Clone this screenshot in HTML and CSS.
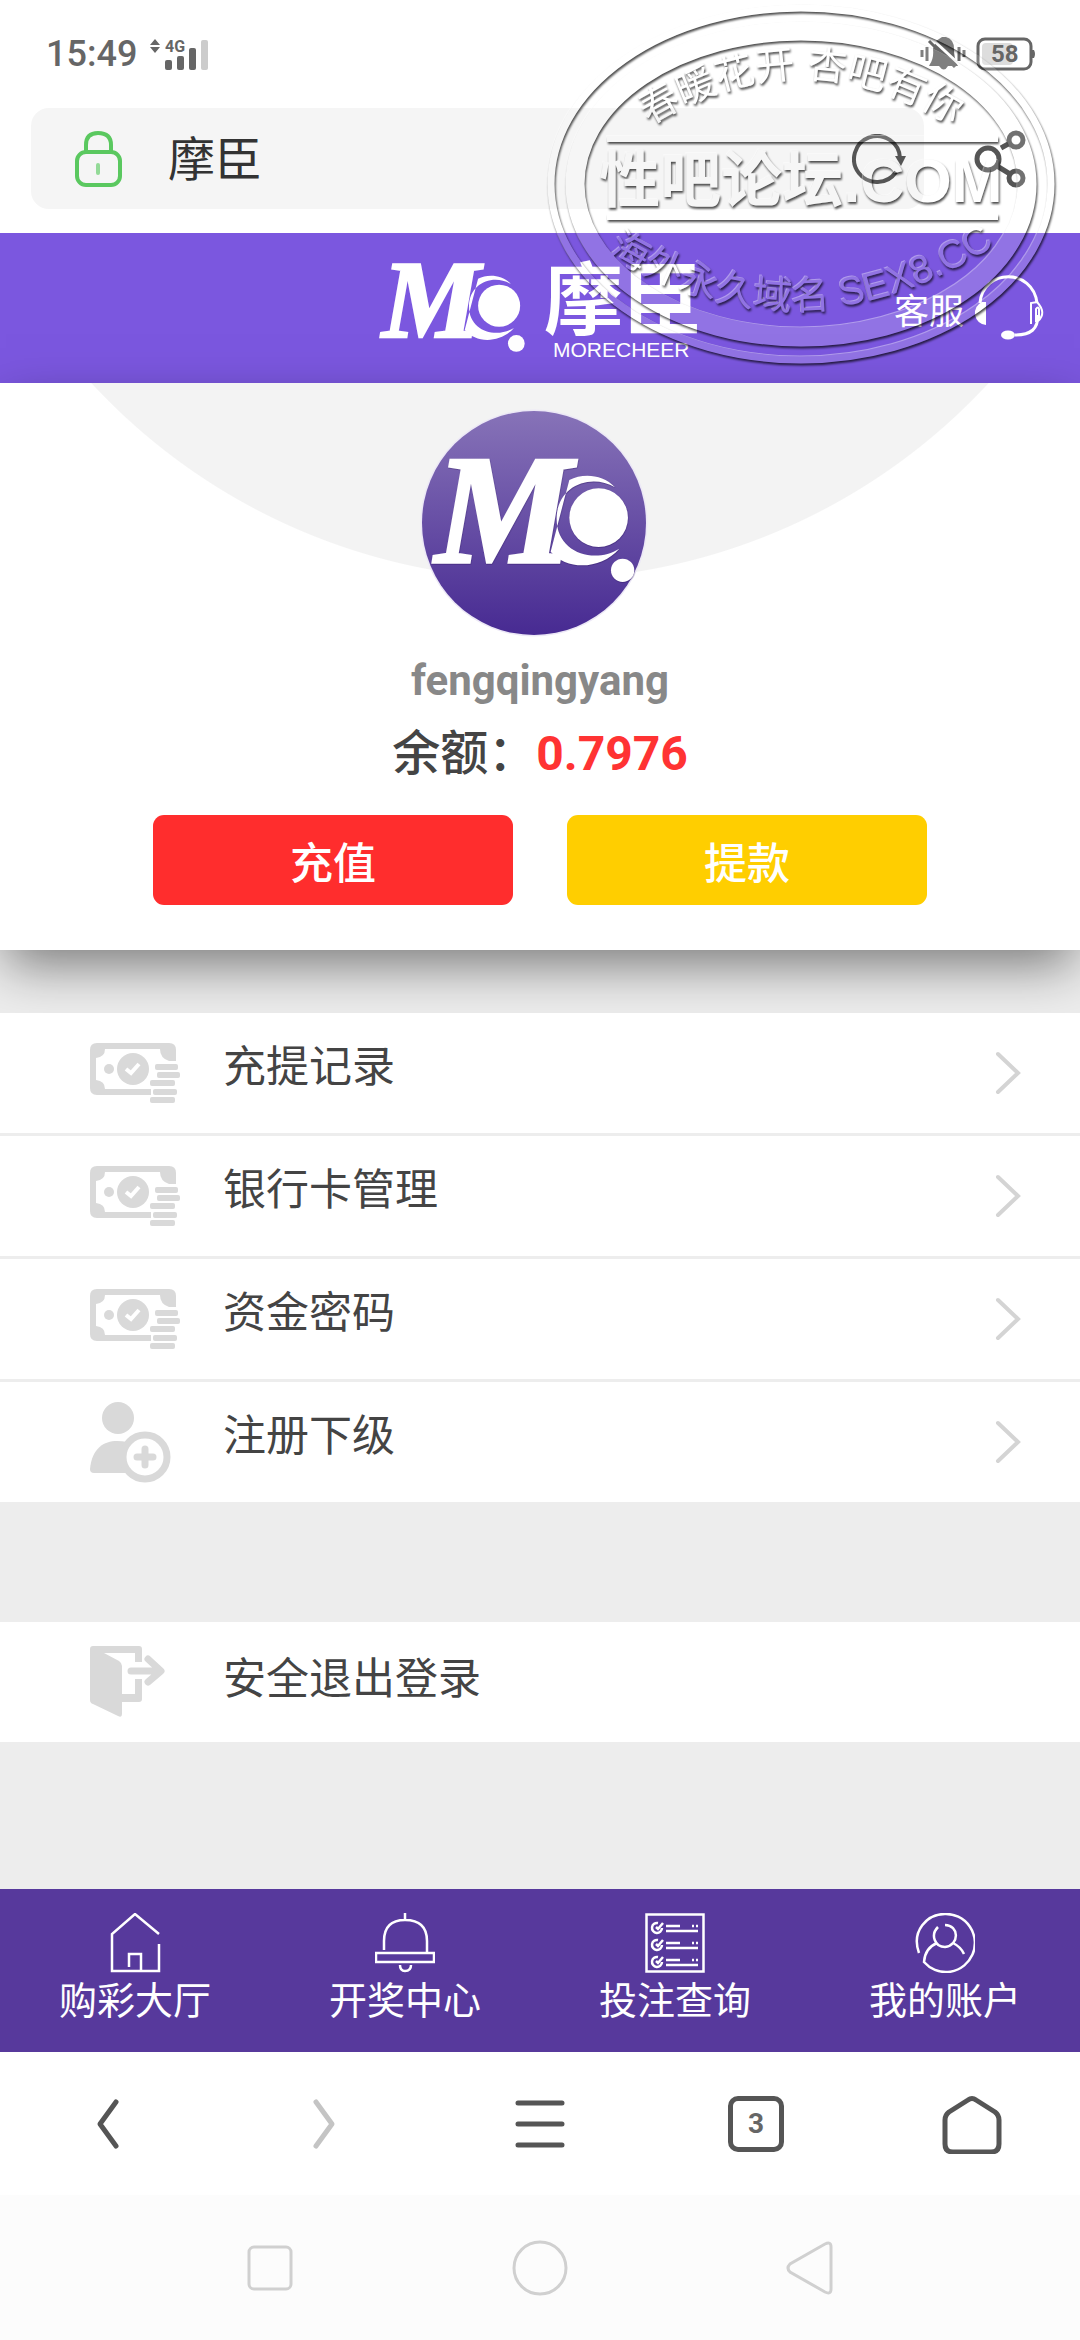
FILE: index.html
```html
<!DOCTYPE html>
<html lang="zh-CN">
<head>
    <meta charset="UTF-8">
    <meta name="viewport" content="width=device-width, initial-scale=1.0">
    <title>摩臣</title>
    <link rel="stylesheet" href="styles.css">
</head>
<body>
    <!-- shared shapes -->
    <svg class="defs" width="0" height="0" aria-hidden="true">
        <defs>
            <symbol id="mc-logo" viewBox="0 0 900 700" overflow="visible">
                <text class="logo-letter" x="226" y="545">M</text>
                <path d="M765 322C728 282 668 280 628 300L572 515C620 572 722 570 778 506C704 552 590 520 590 416C590 318 692 278 765 322Z"/>
                <circle cx="716" cy="413" r="88"/>
                <circle cx="788" cy="571" r="35"/>
            </symbol>
            <symbol id="icon-money" viewBox="0 0 90 60">
                <path fill-rule="evenodd" d="M7 0H79Q86 0 86 7V18H79Q70 15 70 6H15Q15 14 6 15V37Q15 38 15 46H61V52H7Q0 52 0 45V7Q0 0 7 0Z"/>
                <circle cx="19" cy="26" r="5"/>
                <circle cx="43" cy="26" r="16"/>
                <path d="M36 26L41 30L49 21" fill="none" stroke="#fff" stroke-width="4"/>
                <rect x="65" y="21" width="23" height="6" rx="2"/>
                <rect x="67" y="29" width="23" height="6" rx="2"/>
                <rect x="60" y="37" width="25" height="6" rx="2"/>
                <rect x="63" y="46" width="24" height="6" rx="2"/>
                <rect x="60" y="54" width="25" height="6" rx="2"/>
            </symbol>
            <symbol id="icon-arrow" viewBox="0 0 26 44">
                <path d="M3 3L23 22L3 41" fill="none" stroke="#d4d4d4" stroke-width="4" stroke-linecap="round"/>
            </symbol>
        </defs>
    </svg>

    <div class="status-bar">
        <span class="time">15:49</span>
        <svg class="signal" width="60" height="34" viewBox="0 0 60 34">
            <path d="M1 8L6 2L11 8ZM1 10H11L6 16Z"/>
            <text x="16" y="15">4G</text>
            <rect x="16" y="23" width="7" height="10" rx="2"/>
            <rect x="28" y="19" width="7" height="14" rx="2"/>
            <rect x="40" y="11" width="7" height="22" rx="2"/>
            <rect x="52" y="3" width="7" height="30" rx="2" fill="#ccc"/>
        </svg>
        <svg class="muted" width="46" height="36" viewBox="0 0 46 36">
            <path d="M10 28Q14 22 13 13L16 5L22 1H26Q34 3 34 13Q34 22 37 28L38 30H28Q24 37 19 30H9Z"/>
            <path d="M12 3L39 28" stroke="#fff" stroke-width="3"/>
            <path d="M9 5L35 31M2 14V21M7 11V25M39 11V25M44 14V21" stroke="#666" stroke-width="3"/>
        </svg>
        <svg class="battery" width="60" height="34" viewBox="0 0 60 34">
            <rect x="6" y="6" width="31" height="22" rx="4" fill="#ddd"/>
            <rect x="2" y="2" width="53" height="30" rx="7" fill="none" stroke="#666" stroke-width="3"/>
            <path d="M56 13H58Q60 17 58 21H56Z"/>
            <text x="15" y="25">58</text>
        </svg>
    </div>

    <div class="browser-bar">
        <div class="address">
            <svg width="47" height="56" viewBox="0 0 47 56" fill="none" stroke="#5ac85f" stroke-width="4">
                <path d="M11 21V14Q11 2 23 2Q36 2 36 14V21"/>
                <rect x="2" y="21" width="43" height="33" rx="9"/>
                <path d="M23 34V42" stroke="#93da97" stroke-linecap="round"/>
            </svg>
            <input type="text" class="address-input" value="摩臣" aria-label="网址">
            <button class="icon-btn" aria-label="刷新">
                <svg width="54" height="50" viewBox="0 0 54 50">
                    <path d="M44 38A23 23 0 1 1 48 24" fill="none" stroke="#555" stroke-width="4"/>
                    <path d="M43 22H54L49 32Z" fill="#555"/>
                </svg>
            </button>
        </div>
        <button class="icon-btn" aria-label="分享">
            <svg width="52" height="58" viewBox="0 0 52 58" fill="none" stroke="#555" stroke-width="5">
                <circle cx="14" cy="29" r="11"/>
                <circle cx="42" cy="10" r="7"/>
                <circle cx="42" cy="48" r="7"/>
                <path d="M27 18L36 13M23 36L36 44"/>
            </svg>
        </button>
    </div>

    <header class="site-header">
        <a class="logo" href="#">
            <svg class="logo-mark" width="148" height="90" viewBox="0 0 148 90">
                <use href="#mc-logo" width="900" height="700" transform="translate(-50 -56) scale(.239)"/>
            </svg>
            <span class="logo-text">
                <strong>摩臣</strong>
                <small>MORECHEER</small>
            </span>
        </a>
        <a class="service" href="#">
            客服
            <svg width="70" height="66" viewBox="0 0 70 66">
                <path d="M6 28C9 -7 59 -7 63 28M64 40C64 54 57 60 41 60" fill="none" stroke="#fff" stroke-width="3"/>
                <path d="M12 27V50Q3 49 1 40Q0 31 8 27Z"/>
                <path d="M57 49V28L63 27Q73 38 64 46M62 47V34Q64 31 65 34V43" fill="none" stroke="#fff" stroke-width="2"/>
                <ellipse cx="34" cy="60" rx="7" ry="4.500"/>
            </svg>
        </a>
    </header>

    <main>
        <section class="profile">
            <svg class="avatar" width="236" height="224" viewBox="0 0 236 224">
                <defs>
                    <linearGradient id="avatarFill" x1="0" y1="0" x2="0" y2="1">
                        <stop offset="0" stop-color="#8773b8"/>
                        <stop offset="1" stop-color="#472a92"/>
                    </linearGradient>
                </defs>
                <circle class="avatar-bg" cx="112" cy="112" r="112" fill="url(#avatarFill)"/>
                <use class="avatar-mark" href="#mc-logo" width="900" height="700" transform="translate(-62 -31) scale(.3333)"/>
            </svg>
            <div class="username">fengqingyang</div>
            <div class="balance">余额：<span>0.7976</span></div>
            <div class="actions">
                <button class="btn recharge">充值</button>
                <button class="btn withdraw">提款</button>
            </div>
        </section>

        <nav class="menu">
            <a href="#"><svg class="menu-icon" width="90" height="60"><use href="#icon-money"/></svg><span>充提记录</span><svg width="26" height="44"><use href="#icon-arrow"/></svg></a>
            <a href="#"><svg class="menu-icon" width="90" height="60"><use href="#icon-money"/></svg><span>银行卡管理</span><svg width="26" height="44"><use href="#icon-arrow"/></svg></a>
            <a href="#"><svg class="menu-icon" width="90" height="60"><use href="#icon-money"/></svg><span>资金密码</span><svg width="26" height="44"><use href="#icon-arrow"/></svg></a>
            <a href="#">
                <svg class="menu-icon" width="90" height="82" viewBox="0 0 90 82">
                    <circle cx="28" cy="17" r="16"/>
                    <path d="M4 72Q0 72 0 68C2 47 14 40 27 40Q38 40 44 44L44 72Z"/>
                    <circle cx="55" cy="56" r="22" fill="#fff" stroke="#d9d9d9" stroke-width="7"/>
                    <path d="M47 56H63M55 48V64" stroke="#d9d9d9" stroke-width="7" stroke-linecap="round"/>
                </svg>
                <span>注册下级</span><svg width="26" height="44"><use href="#icon-arrow"/></svg>
            </a>
        </nav>

        <nav class="menu logout">
            <a href="#">
                <svg class="menu-icon" width="90" height="72" viewBox="0 0 90 72">
                    <path d="M3 0H49Q52 0 52 3V16H45V7H14L29 15Q32 17 32 20V48H45V33H52V53Q52 56 49 56H32V68Q32 72 28 70L3 58Q0 57 0 54V3Q0 0 3 0Z"/>
                    <path d="M41 25H70M58 13L71 25L58 36" fill="none" stroke="#d9d9d9" stroke-width="7" stroke-linecap="round" stroke-linejoin="round"/>
                </svg>
                <span>安全退出登录</span>
            </a>
        </nav>
    </main>

    <nav class="tab-bar">
        <a href="#">
            <svg width="60" height="60" viewBox="0 0 60 60">
                <path d="M54 21L30 1L7 21V58H54V31M24 54V41H36V58"/>
            </svg>
            购彩大厅
        </a>
        <a href="#">
            <svg width="60" height="60" viewBox="0 0 60 60">
                <path d="M30 0V7M9 37V28Q9 7 30 7Q52 7 52 28V40M1 40H59V49H1ZM25 52Q25 58 30 58Q36 58 36 52"/>
            </svg>
            开奖中心
        </a>
        <a href="#">
            <svg width="60" height="60" viewBox="0 0 60 60">
                <rect x="1.500" y="1.500" width="57" height="57"/>
                <path d="M13 10A5 5 0 1 0 17 15M11 14L13 16L18 10M13 27A5 5 0 1 0 17 32M11 31L13 33L18 27M13 44A5 5 0 1 0 17 49M11 48L13 50L18 44"/>
                <path d="M21 13H35M21 18H53M47 13H49M51 13H53M21 30H35M21 35H53M47 30H49M51 30H53M21 47H35M21 52H53M47 47H49M51 47H53"/>
            </svg>
            投注查询
        </a>
        <a href="#">
            <svg width="60" height="60" viewBox="0 0 60 60">
                <path d="M4 40C-4 18 12 1 30 1A29 29 0 1 1 9 49Q10 35 22 30M38 30Q46 34 49 41M23 14C15 22 20 34 30 34C45 32 44 12 30 12"/>
            </svg>
            我的账户
        </a>
    </nav>

    <nav class="browser-nav">
        <button class="icon-btn" aria-label="后退"><svg width="60" height="60" viewBox="0 0 60 60"><path d="M38 8L22 30L38 52"/></svg></button>
        <button class="icon-btn" aria-label="前进"><svg class="disabled" width="60" height="60" viewBox="0 0 60 60"><path d="M22 8L38 30L22 52"/></svg></button>
        <button class="icon-btn" aria-label="菜单"><svg width="60" height="60" viewBox="0 0 60 60"><path d="M8 9H52M8 30H52M8 51H52"/></svg></button>
        <button class="icon-btn" aria-label="窗口"><span class="tab-count">3</span></button>
        <button class="icon-btn" aria-label="主页"><svg width="60" height="60" viewBox="0 0 60 60"><path d="M26 6Q30 3 34 6L53 18Q57 21 57 26V50Q57 58 49 58H11Q3 58 3 50V26Q3 21 7 18Z"/></svg></button>
    </nav>

    <div class="system-nav">
        <button class="icon-btn" aria-label="最近任务"><svg width="60" height="60" viewBox="0 0 60 60"><rect x="9" y="9" width="42" height="42" rx="5"/></svg></button>
        <button class="icon-btn" aria-label="桌面"><svg width="60" height="60" viewBox="0 0 60 60"><circle cx="30" cy="30" r="26"/></svg></button>
        <button class="icon-btn" aria-label="返回"><svg width="60" height="60" viewBox="0 0 60 60"><path d="M45 6Q51 3 51 9V51Q51 57 45 54L10 34Q6 30 10 26Z"/></svg></button>
    </div>

    <!-- embossed forum stamp -->
    <svg class="stamp" width="520" height="376" viewBox="541 0 520 376">
        <defs>
            <filter id="emboss" filterUnits="userSpaceOnUse" x="541" y="0" width="520" height="376" color-interpolation-filters="sRGB">
                <feOffset in="SourceAlpha" dx="1" dy="2" result="down"/>
                <feGaussianBlur in="down" stdDeviation="0.8" result="downBlur"/>
                <feComposite in="downBlur" in2="SourceAlpha" operator="out" result="shadeMask"/>
                <feFlood flood-color="#000" flood-opacity="0.7"/>
                <feComposite in2="shadeMask" operator="in" result="shade"/>
                <feOffset in="SourceAlpha" dx="-1" dy="-1" result="up"/>
                <feComposite in="up" in2="SourceAlpha" operator="out" result="lightMask"/>
                <feFlood flood-color="#fff" flood-opacity="0.4"/>
                <feComposite in2="lightMask" operator="in" result="light"/>
                <feComponentTransfer in="SourceGraphic" result="body">
                    <feFuncA type="linear" slope="0.17"/>
                </feComponentTransfer>
                <feMerge>
                    <feMergeNode in="light"/>
                    <feMergeNode in="shade"/>
                    <feMergeNode in="body"/>
                </feMerge>
            </filter>
            <path id="arcTop" d="M636 134Q801 22 966 134"/>
            <path id="arcBottom" d="M602 250Q800 373 1000 242"/>
        </defs>
        <g filter="url(#emboss)">
            <ellipse cx="801" cy="184" rx="250" ry="176" fill="none" stroke="#fff" stroke-width="7"/>
            <ellipse cx="801" cy="184" rx="226" ry="153" fill="none" stroke="#fff" stroke-width="19"/>
            <rect x="607" y="136" width="391" height="6" fill="#fff"/>
            <rect x="607" y="214" width="391" height="6" fill="#fff"/>
            <text class="stamp-arc"><textPath href="#arcTop" startOffset="50%" text-anchor="middle">春暖花开 杏吧有你</textPath></text>
            <text class="stamp-main" x="801" y="202" text-anchor="middle">性吧论坛.COM</text>
            <text class="stamp-arc"><textPath href="#arcBottom" startOffset="50%" text-anchor="middle">海外永久域名 SEX8.CC</textPath></text>
        </g>
    </svg>
</body>
</html>
```
FILE: styles.css
```css
* {
    box-sizing: border-box;
}
body {
    margin: 0;
    min-height: 100vh;
    display: flex;
    flex-direction: column;
    position: relative;
    font-family: Roboto, "Noto Sans CJK SC", sans-serif;
    background-color: #ededed;
    color: #444;
}
a {
    color: inherit;
    text-decoration: none;
}
svg {
    display: block;
    flex-shrink: 0;
}
.defs {
    position: absolute;
}
.icon-btn {
    display: flex;
    align-items: center;
    justify-content: center;
    padding: 0;
    border: none;
    background: none;
    cursor: pointer;
}

/* phone status bar */
.status-bar {
    display: flex;
    align-items: center;
    height: 108px;
    padding: 0 44px 0 46px;
    background-color: #fff;
    fill: #666;
}
.time {
    font-size: 36px;
    font-weight: 500;
    line-height: 44px;
    color: #666;
}
.signal {
    margin-left: 12px;
}
.signal text {
    font-size: 16px;
    font-weight: bold;
}
.muted {
    margin-left: auto;
}
.battery {
    margin-left: 10px;
}
.battery text {
    font-size: 24px;
    font-weight: bold;
}

/* address bar */
.browser-bar {
    display: flex;
    align-items: center;
    gap: 50px;
    padding: 0 54px 24px 31px;
    background-color: #fff;
}
.address {
    flex: 1;
    display: flex;
    align-items: center;
    height: 101px;
    padding: 0 18px 0 44px;
    border-radius: 18px;
    background-color: #f5f5f5;
}
.address-input {
    flex: 1;
    min-width: 0;
    margin-left: 46px;
    padding: 0 0 6px;
    border: none;
    background: none;
    font-family: inherit;
    font-size: 47px;
    color: #333;
}

/* site header */
.site-header {
    display: grid;
    grid-template-columns: 1fr auto 1fr;
    align-items: center;
    height: 150px;
    background-color: #7b57df;
    color: #fff;
    fill: #fff;
}
.logo {
    grid-column: 2;
    display: flex;
    align-items: center;
    gap: 18px;
}
.logo-letter {
    font-family: "Liberation Serif", serif;
    font-size: 462px;
    font-weight: bold;
    font-style: italic;
    stroke: #fff;
    stroke-width: 10px;
}
.logo-text {
    padding-top: 8px;
}
.logo-text strong {
    display: block;
    font-size: 79px;
    line-height: 76px;
}
.logo-text small {
    display: block;
    padding-left: 9px;
    font-family: "Liberation Sans", sans-serif;
    font-size: 21px;
    line-height: 20px;
}
.service {
    justify-self: end;
    display: flex;
    align-items: center;
    gap: 10px;
    padding-right: 36px;
    font-size: 35px;
}

/* profile */
.profile {
    padding: 28px 0 45px;
    text-align: center;
    background: radial-gradient(circle at 50% -414px, #f3f3f3 610px, #fff 611px);
    box-shadow: 0 20px 50px -6px rgba(0, 0, 0, 0.5);
}
.avatar {
    margin: 0 auto;
    overflow: visible;
}
.avatar-bg {
    stroke: #ece8f6;
    stroke-width: 3px;
    paint-order: stroke;
}
.avatar-mark {
    fill: #fff;
    filter: drop-shadow(1px 2px 1px rgba(40, 20, 90, 0.5));
}
.username {
    margin-top: 18px;
    font-size: 42px;
    font-weight: bold;
    line-height: 56px;
    color: #888;
}
.balance {
    margin-top: 8px;
    font-size: 48px;
    font-weight: 500;
    line-height: 74px;
}
.balance span {
    font-weight: bold;
    color: #ff3333;
}
.actions {
    display: flex;
    justify-content: center;
    gap: 5%;
    margin-top: 24px;
}
.btn {
    width: 33.333%;
    height: 90px;
    border: none;
    border-radius: 11px;
    color: #fff;
    font-family: inherit;
    font-size: 43px;
    font-weight: 500;
    cursor: pointer;
}
.recharge {
    background-color: #ff2d2d;
}
.withdraw {
    background-color: #ffce00;
}

/* menu list */
.menu {
    display: flex;
    flex-direction: column;
    gap: 3px;
    margin-top: 63px;
}
.menu a {
    display: flex;
    align-items: center;
    height: 120px;
    padding: 0 59px 0 90px;
    background-color: #fff;
    font-size: 43px;
}
.menu-icon {
    fill: #d9d9d9;
}
.menu span {
    flex: 1;
    margin-left: 43px;
    padding-bottom: 20px;
}
.logout {
    margin-top: 120px;
}
.logout span {
    padding-bottom: 14px;
}

/* bottom tabs */
.tab-bar {
    display: flex;
    margin-top: auto;
    padding-top: 24px;
    height: 163px;
    background-color: #57399c;
    color: #fff;
}
.tab-bar a {
    flex: 1;
    display: flex;
    flex-direction: column;
    align-items: center;
    font-size: 38px;
    line-height: 56px;
}
.tab-bar svg {
    fill: none;
    stroke: #fff;
    stroke-width: 2.5px;
}

/* browser buttons */
.browser-nav {
    display: flex;
    height: 143px;
    background-color: #fff;
}
.browser-nav .icon-btn {
    flex: 1;
}
.browser-nav svg {
    fill: none;
    stroke: #555;
    stroke-width: 5px;
    stroke-linecap: round;
    stroke-linejoin: round;
}
.browser-nav .disabled {
    stroke: #c4c4c4;
}
.tab-count {
    width: 56px;
    height: 56px;
    border: 5px solid #555;
    border-radius: 10px;
    font-family: Roboto, sans-serif;
    font-size: 28px;
    font-weight: bold;
    line-height: 46px;
    color: #666;
}

/* system buttons */
.system-nav {
    display: flex;
    justify-content: center;
    height: 145px;
    background-color: #fcfcfc;
}
.system-nav .icon-btn {
    width: 25%;
}
.system-nav svg {
    fill: none;
    stroke: #d0d0d0;
    stroke-width: 3px;
}

/* stamp over the top of the page */
.stamp {
    position: absolute;
    top: 0;
    right: 19px;
    pointer-events: none;
}
.stamp text {
    fill: #fff;
    font-family: "Liberation Sans", "Noto Sans CJK SC", sans-serif;
}
.stamp-arc {
    font-size: 39px;
}
.stamp .stamp-main {
    font-size: 61px;
    font-weight: bold;
}
```
